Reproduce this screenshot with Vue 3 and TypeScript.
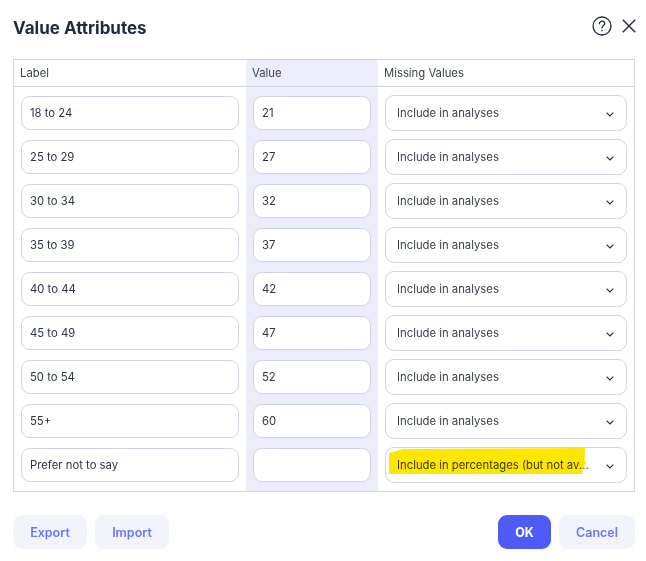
<script setup lang="ts">
interface Row { label: string; value: string; missing: string; marked?: boolean }
const analyses = 'Include in analyses'
const rows: Row[] = [
  { label: '18 to 24', value: '21', missing: analyses },
  { label: '25 to 29', value: '27', missing: analyses },
  { label: '30 to 34', value: '32', missing: analyses },
  { label: '35 to 39', value: '37', missing: analyses },
  { label: '40 to 44', value: '42', missing: analyses },
  { label: '45 to 49', value: '47', missing: analyses },
  { label: '50 to 54', value: '52', missing: analyses },
  { label: '55+', value: '60', missing: analyses },
  { label: 'Prefer not to say', value: '', missing: 'Include in percentages (but not averages)', marked: true },
]
</script>

<template>
  <div class="dialog">
    <header class="head">
      <h1 class="title">Value Attributes</h1>
      <div class="tools">
        <svg width="20" height="20" viewBox="0 0 20 20" fill="none" stroke="#1d2b3f" stroke-width="1.3">
          <circle cx="10" cy="10" r="9" />
          <path d="M7.4 7.8c0-1.6 1.2-2.6 2.7-2.6s2.6 1 2.6 2.3c0 1.9-2.7 2.1-2.7 4.3" stroke-linecap="round" />
          <circle cx="10" cy="14.6" r="0.8" fill="#1d2b3f" stroke="none" />
        </svg>
        <svg width="14" height="14" viewBox="0 0 14 14" fill="none" stroke="#1d2b3f" stroke-width="1.4">
          <path d="M0.8 0.8L13.2 13.2M13.2 0.8L0.8 13.2" />
        </svg>
      </div>
    </header>

    <section class="table">
      <div class="cell-head">Label</div>
      <div class="cell-head value-col">Value</div>
      <div class="cell-head">Missing Values</div>
      <template v-for="(row, i) in rows" :key="row.label">
        <div class="cell" :class="{ first: i === 0, last: i === rows.length - 1 }">
          <div class="input">{{ row.label }}</div>
        </div>
        <div class="cell value-col" :class="{ first: i === 0, last: i === rows.length - 1 }">
          <div class="input">{{ row.value }}</div>
        </div>
        <div class="cell" :class="{ first: i === 0, last: i === rows.length - 1 }">
          <div class="select">
            <span class="select-text">{{ row.missing }}</span>
            <svg class="chev" width="8" height="5" viewBox="0 0 8 5" fill="none" stroke="#1d2b3f" stroke-width="1.1">
              <path d="M0.6 0.6L4 4L7.4 0.6" />
            </svg>
            <svg v-if="row.marked" class="marker" width="197" height="28" viewBox="0 0 197 28">
              <path d="M0 5L14 1L196 0L195.500 12L197 15L194 20L193 26L0 26Z" fill="#ffe600" />
            </svg>
          </div>
        </div>
      </template>
    </section>

    <footer class="foot">
      <div class="group">
        <button class="btn soft wide">Export</button>
        <button class="btn soft wide">Import</button>
      </div>
      <div class="group">
        <button class="btn primary">OK</button>
        <button class="btn soft cancel">Cancel</button>
      </div>
    </footer>
  </div>
</template>

<style>
html, body { margin: 0; background: #fff; }
</style>

<style scoped>
.dialog {
  width: 646px;
  height: 561px;
  box-sizing: border-box;
  padding: 0 10px 0 13px;
  font-family: Inter, "Liberation Sans", sans-serif;
  color: #2b3442;
  background: #fff;
  overflow: hidden;
}
.head {
  height: 59px;
  display: flex;
  align-items: flex-start;
  justify-content: space-between;
}
.title {
  margin: 17px 0 0;
  font-size: 17px;
  line-height: 22px;
  font-weight: 700;
  color: #1d2b3f;
}
.tools {
  display: flex;
  align-items: center;
  gap: 10px;
  margin: 16px 0 0;
}
.table {
  width: 622px;
  box-sizing: border-box;
  display: grid;
  grid-template-columns: 232px 132px 256px;
  border: 1px solid #d0d5e0;
}
.cell-head {
  height: 27px;
  box-sizing: border-box;
  padding: 0 6px;
  font-size: 11.3px;
  line-height: 26px;
  color: #3a4250;
  border-bottom: 1px solid #d0d5e0;
}
.value-col { background: #ebedfb; }
.cell {
  height: 44px;
  display: flex;
  align-items: center;
  padding: 0 7px;
}
.cell.first { height: 48px; padding-top: 4px; box-sizing: border-box; }
.cell.last { height: 48px; padding-bottom: 4px; box-sizing: border-box; }
.input {
  flex: 1;
  height: 34px;
  box-sizing: border-box;
  border: 1px solid #d0d5e0;
  border-radius: 9px;
  background: #fff;
  padding: 0 8px;
  font-size: 11.3px;
  line-height: 32px;
  color: #2b3442;
}
.select {
  position: relative;
  flex: 1;
  height: 36px;
  box-sizing: border-box;
  border: 1px solid #d0d5e0;
  border-radius: 9px;
  background: #fff;
  display: flex;
  align-items: center;
  justify-content: space-between;
  padding: 0 12px 0 11px;
  font-size: 11.3px;
  color: #3a4250;
}
.select-text {
  width: 193px;
  white-space: nowrap;
  overflow: hidden;
  text-overflow: ellipsis;
}
.chev { flex: none; margin-top: 2px; }
.marker {
  position: absolute;
  left: 3px;
  top: 0;
  mix-blend-mode: multiply;
  pointer-events: none;
}
.foot {
  width: 622px;
  display: flex;
  justify-content: space-between;
  margin-top: 23px;
}
.group { display: flex; gap: 8px; }
.btn {
  height: 34px;
  border: none;
  border-radius: 9px;
  padding: 0;
  font-family: inherit;
  font-size: 12.5px;
  font-weight: 600;
}
.soft { background: #f1f4fa; color: #6f74f0; }
.wide { width: 74px; }
.primary { width: 53px; background: #4f5bf5; color: #fff; font-weight: 700; }
.cancel { width: 76px; }
</style>
